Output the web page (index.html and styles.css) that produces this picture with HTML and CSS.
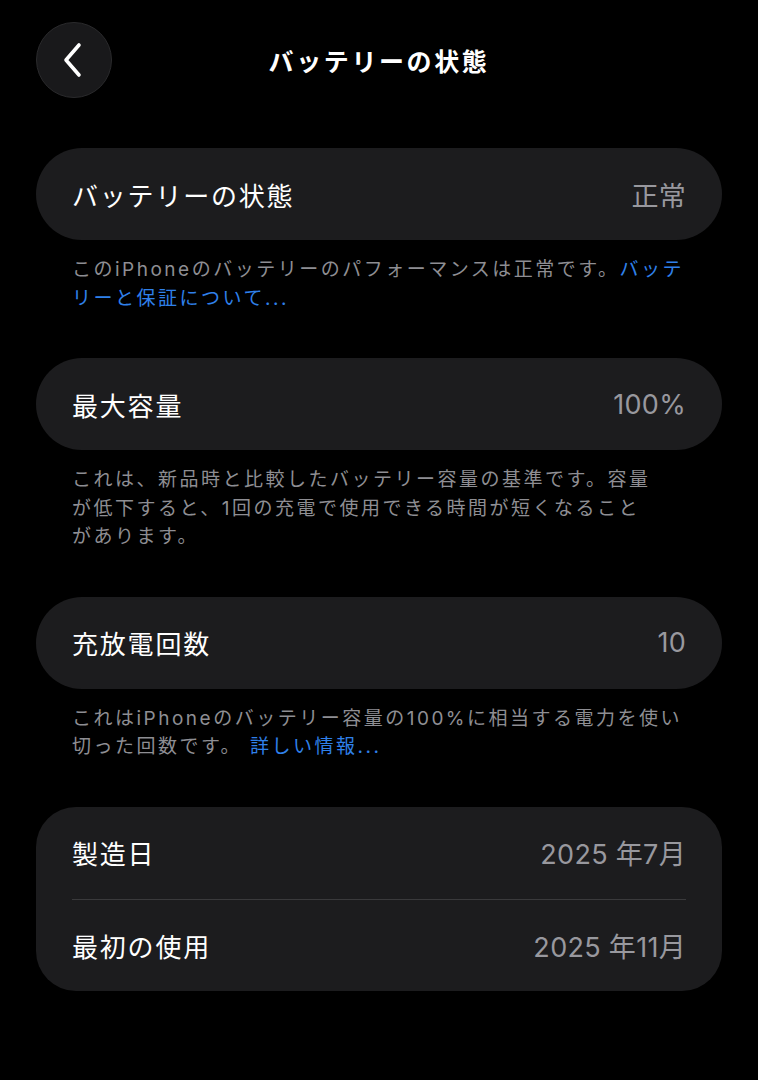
FILE: index.html
```html
<!DOCTYPE html>
<html lang="ja">
<head>
    <meta charset="utf-8">
    <title>バッテリーの状態</title>
    <link rel="stylesheet" href="styles.css">
</head>
<body>
    <div class="header">
        <div class="back-btn">
            <svg width="24" height="36" viewBox="0 0 24 36">
                <path d="M18 3 L5 18 L18 33" fill="none" stroke="#fff" stroke-width="3.6" stroke-linecap="round" stroke-linejoin="round"/>
            </svg>
        </div>
        <h1 class="title">バッテリーの状態</h1>
        <div></div>
    </div>

    <div class="card">
        <div class="row">
            <span class="row-label">バッテリーの状態</span>
            <span class="row-value">正常</span>
        </div>
    </div>
    <p class="note">このiPhoneのバッテリーのパフォーマンスは正常です。<a href="#">バッテ<br>リーと保証について...</a></p>

    <div class="card">
        <div class="row">
            <span class="row-label">最大容量</span>
            <span class="row-value">100%</span>
        </div>
    </div>
    <p class="note">これは、新品時と比較したバッテリー容量の基準です。容量<br>が低下すると、1回の充電で使用できる時間が短くなること<br>があります。</p>

    <div class="card">
        <div class="row">
            <span class="row-label">充放電回数</span>
            <span class="row-value">10</span>
        </div>
    </div>
    <p class="note">これはiPhoneのバッテリー容量の100%に相当する電力を使い<br>切った回数です。 <a href="#">詳しい情報...</a></p>

    <div class="card card-group">
        <div class="row">
            <span class="row-label">製造日</span>
            <span class="row-value">2025 年7月</span>
        </div>
        <div class="row">
            <span class="row-label">最初の使用</span>
            <span class="row-value">2025 年11月</span>
        </div>
    </div>
</body>
</html>
```

FILE: styles.css
```css
* {
    margin: 0;
    padding: 0;
    box-sizing: border-box;
}

body {
    font-family: Inter, "Noto Sans CJK JP", sans-serif;
    background: #000;
    color: #fff;
    padding: 22px 36px;
}

.header {
    display: grid;
    grid-template-columns: 76px 1fr 76px;
    align-items: center;
    margin-bottom: 50px;
}

.back-btn {
    width: 76px;
    height: 76px;
    border-radius: 50%;
    background: #19191b;
    border: 1px solid #2a2a2c;
    display: flex;
    align-items: center;
    justify-content: center;
    padding-right: 3px;
}

.title {
    text-align: center;
    font-size: 25px;
    font-weight: 700;
    letter-spacing: 2.6px;
}

.card {
    background: #1c1c1e;
    border-radius: 46px;
    padding: 0 36px;
}

.card-group {
    border-radius: 40px;
}

.row {
    height: 92px;
    display: flex;
    justify-content: space-between;
    align-items: center;
}

.card-group .row + .row {
    border-top: 1px solid #3a3a3c;
}

.row-label {
    font-size: 26px;
    font-weight: 400;
    letter-spacing: 1.8px;
}

.row-value {
    font-size: 27px;
    color: #98989e;
    letter-spacing: 0.3px;
}

.note {
    padding: 16px 36px 0;
    margin-bottom: 45px;
    font-size: 19px;
    line-height: 28.5px;
    color: #8e8e93;
    letter-spacing: 2.5px;
    white-space: nowrap;
}

.note a {
    color: #2f80ea;
    text-decoration: none;
}
```
